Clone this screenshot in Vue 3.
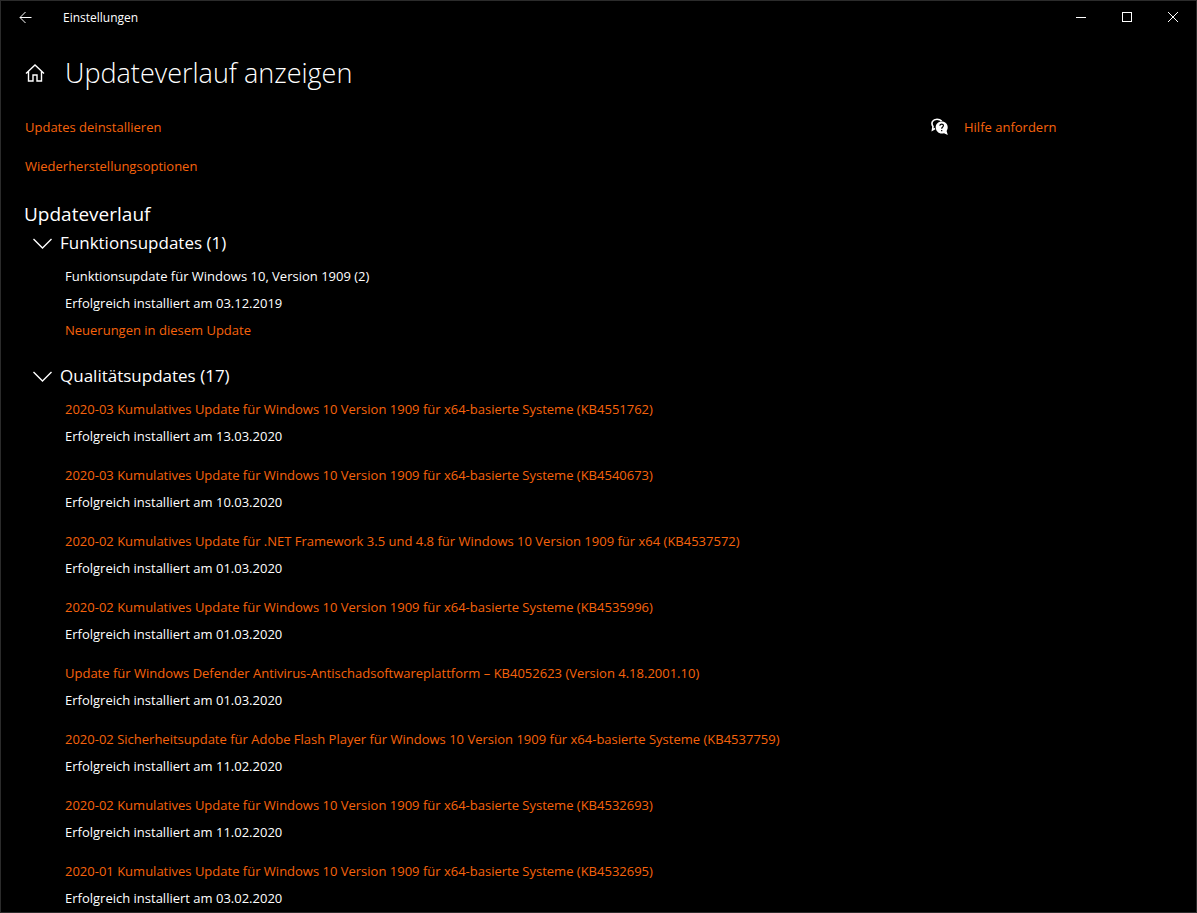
<template>
    <div class="window">
        <header class="titlebar">
            <button class="titlebar__back" type="button" aria-label="Zurück">
                <svg width="13" height="13" viewBox="0 0 13 13" aria-hidden="true">
                    <path d="M12.5 6.5H1M6.5 1L1 6.5L6.5 12" />
                </svg>
            </button>
            <span class="titlebar__name">Einstellungen</span>
            <div class="titlebar__controls">
                <button type="button" aria-label="Minimieren">
                    <svg width="10" height="10" viewBox="0 0 10 10" shape-rendering="crispEdges" aria-hidden="true">
                        <path d="M0 5.5H10" />
                    </svg>
                </button>
                <button type="button" aria-label="Maximieren">
                    <svg width="10" height="10" viewBox="0 0 10 10" shape-rendering="crispEdges" aria-hidden="true">
                        <path d="M0.5 0.5H9.5V9.5H0.5Z" />
                    </svg>
                </button>
                <button type="button" aria-label="Schließen">
                    <svg width="10" height="10" viewBox="0 0 10 10" aria-hidden="true">
                        <path d="M0 0L10 10M10 0L0 10" />
                    </svg>
                </button>
            </div>
        </header>

        <div class="heading">
            <button class="heading__home" type="button" aria-label="Startseite">
                <svg width="20" height="20" viewBox="0 0 20 20" aria-hidden="true">
                    <path d="M1 10.5L10 2L19 10.5M3.5 8.5V18H8V12H12V18H16.5V8.5" />
                </svg>
            </button>
            <h1>Updateverlauf anzeigen</h1>
        </div>

        <div class="actions">
            <nav class="actions__links">
                <a href="#">Updates deinstallieren</a>
                <a href="#">Wiederherstellungsoptionen</a>
            </nav>
            <a class="help" href="#">
                <svg width="18" height="18" viewBox="0 0 18 18" aria-hidden="true">
                    <path class="help__back" d="M4 10.5L1.5 12L2 8.5C-0.5 4.5 2 1.2 6 1.2C8 1.2 9.5 1.8 10.7 3" />
                    <path class="help__front" d="M10.7 3.5C14.3 3.5 16.7 6 16.7 9.2C16.7 10.8 16.2 12 15.6 13L16.8 17L13 15.2C8 16.5 4.7 13 4.7 9.2C4.7 6 7.2 3.5 10.7 3.5Z" />
                    <path class="help__mark" d="M8.9 7.8C8.9 5.4 12.6 5.5 12.4 7.8C12.3 9 10.7 9.2 10.7 10.8M10.7 12V13.3" />
                </svg>
                Hilfe anfordern
            </a>
        </div>

        <main class="history">
            <h2>Updateverlauf</h2>
            <section v-for="group in groups" :key="group.title" class="group">
                <h3>
                    <button type="button" aria-expanded="true">
                        <svg width="20" height="12" viewBox="0 0 20 12" aria-hidden="true">
                            <path d="M1.5 2L10.5 11L19.5 2" />
                        </svg>
                        {{ group.title }} ({{ group.count }})
                    </button>
                </h3>
                <ul>
                    <li v-for="update in group.updates" :key="update.name">
                        <p v-if="update.news">{{ update.name }}</p>
                        <a v-else href="#">{{ update.name }}</a>
                        <p>Erfolgreich installiert am {{ update.date }}</p>
                        <a v-if="update.news" href="#">{{ update.news }}</a>
                    </li>
                </ul>
            </section>
        </main>
    </div>
</template>

<script setup>
const groups = [
    {
        title: 'Funktionsupdates',
        count: 1,
        updates: [
            {
                name: 'Funktionsupdate für Windows 10, Version 1909 (2)',
                date: '03.12.2019',
                news: 'Neuerungen in diesem Update',
            },
        ],
    },
    {
        title: 'Qualitätsupdates',
        count: 17,
        updates: [
            { name: '2020-03 Kumulatives Update für Windows 10 Version 1909 für x64-basierte Systeme (KB4551762)', date: '13.03.2020' },
            { name: '2020-03 Kumulatives Update für Windows 10 Version 1909 für x64-basierte Systeme (KB4540673)', date: '10.03.2020' },
            { name: '2020-02 Kumulatives Update für .NET Framework 3.5 und 4.8 für Windows 10 Version 1909 für x64 (KB4537572)', date: '01.03.2020' },
            { name: '2020-02 Kumulatives Update für Windows 10 Version 1909 für x64-basierte Systeme (KB4535996)', date: '01.03.2020' },
            { name: 'Update für Windows Defender Antivirus-Antischadsoftwareplattform – KB4052623 (Version 4.18.2001.10)', date: '01.03.2020' },
            { name: '2020-02 Sicherheitsupdate für Adobe Flash Player für Windows 10 Version 1909 für x64-basierte Systeme (KB4537759)', date: '11.02.2020' },
            { name: '2020-02 Kumulatives Update für Windows 10 Version 1909 für x64-basierte Systeme (KB4532693)', date: '11.02.2020' },
            { name: '2020-01 Kumulatives Update für Windows 10 Version 1909 für x64-basierte Systeme (KB4532695)', date: '03.02.2020' },
        ],
    },
]
</script>

<style>
body {
    margin: 0;
    background: #000;
}
</style>

<style scoped>
.window {
    --c-text: #fff;
    --c-link: #f7630c;
    box-sizing: border-box;
    min-height: 100vh;
    border: 1px solid #2b2b2b;
    background: #000;
    color: var(--c-text);
    font-family: "Segoe UI", "Open Sans", "Noto Sans", sans-serif;
    font-size: 13px;
    line-height: 20px;
}

h1,
h2,
h3,
p,
ul {
    margin: 0;
    padding: 0;
    font-weight: 400;
}

ul {
    list-style: none;
}

button {
    display: flex;
    align-items: center;
    justify-content: center;
    padding: 0;
    border: 0;
    background: none;
    color: inherit;
    font: inherit;
    cursor: pointer;
}

a {
    color: var(--c-link);
    text-decoration: none;
}

svg {
    flex: none;
    fill: none;
    stroke: currentColor;
}

.titlebar {
    display: flex;
    align-items: center;
    height: 32px;
    font-size: 12px;
}

.titlebar__back {
    width: 48px;
    height: 32px;
}

.titlebar__name {
    padding: 2px 0 0 14px;
}

.titlebar__controls {
    display: flex;
    margin-left: auto;
}

.titlebar__controls button {
    width: 46px;
    height: 32px;
}

.heading {
    display: flex;
    align-items: center;
    gap: 20px;
    padding: 20px 24px 0;
}

.heading__home svg {
    stroke-width: 1.4;
}

h1 {
    font-size: 27px;
    font-weight: 300;
    line-height: 40px;
}

.actions {
    display: grid;
    grid-template-columns: 1fr 265px;
    align-items: start;
    padding: 24px 0 0 24px;
}

.actions__links {
    display: flex;
    flex-direction: column;
    align-items: flex-start;
    gap: 19px;
}

.help {
    display: flex;
    align-items: center;
    gap: 15px;
}

.help svg {
    color: var(--c-text);
}

.help__back {
    stroke-width: 1.6;
}

.help__front {
    fill: currentColor;
    stroke: none;
}

.help__mark {
    stroke: #000;
    stroke-width: 1.2;
}

.history {
    padding: 24px 24px 0 23px;
}

h2 {
    margin-bottom: 1px;
    font-size: 19px;
    line-height: 28px;
}

.group + .group {
    margin-top: 18px;
}

h3 {
    padding-left: 8px;
    font-size: 17px;
    line-height: 28px;
}

h3 button {
    gap: 8px;
}

h3 svg {
    stroke-width: 1.4;
}

.group ul {
    display: flex;
    flex-direction: column;
    gap: 12px;
    padding: 6px 0 0 41px;
    line-height: 27px;
}

.group li {
    display: flex;
    flex-direction: column;
    align-items: flex-start;
}
</style>
